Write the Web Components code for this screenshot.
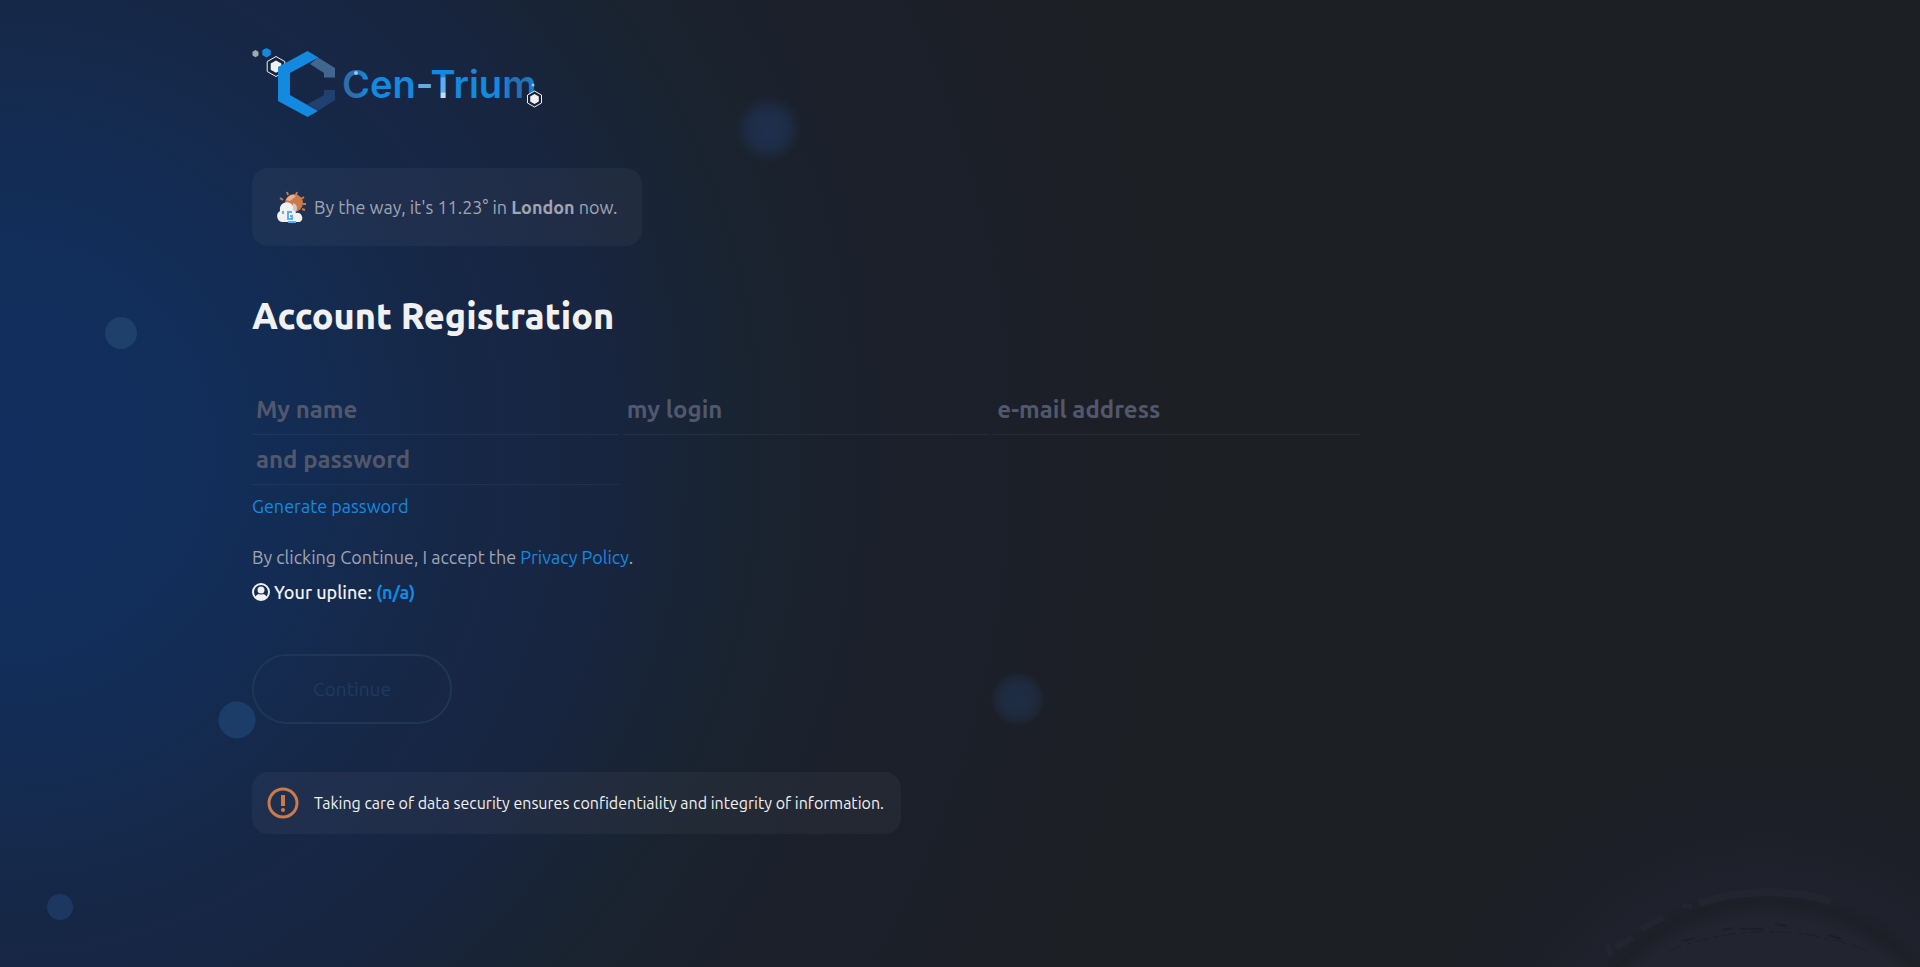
<!DOCTYPE html>
<html lang="en">
<head>
<meta charset="utf-8">
<meta name="viewport" content="width=device-width, initial-scale=1">
<title>Cen-Trium – Account Registration</title>
<style>
  body { margin: 0; background: #1c1f23; font-family: Ubuntu, "Noto Sans", sans-serif; color: #f1f1f1; }
</style>
</head>
<body>
<registration-page></registration-page>
<script>
const define = (name, html, setup) => {
  const template = document.createElement('template');
  template.innerHTML = html;
  customElements.define(name, class extends HTMLElement {
    constructor() {
      super();
      this.attachShadow({ mode: 'open' }).append(template.content.cloneNode(true));
    }
    connectedCallback() { if (setup) setup(this, this.shadowRoot); }
  });
};

/* Decorative glow, bubbles and planet behind the form */
define('page-backdrop', `
  <style>
    :host { display: block; position: absolute; inset: 0; overflow: hidden; z-index: -1;
      background: radial-gradient(circle at 0 450px, #112e5e 0, #122e5b 200px, #142b50 340px, #162746 470px, #182540 600px, #19232f 760px, #1b202b 900px, #1c1f28 1060px, #1c1f23 1190px); }
    i { position: absolute; border-radius: 50%; transform: translate(-50%, -50%); width: var(--d); height: var(--d); background: #1f406b; }
    .a { left: 121px; top: 333px; --d: 32px; }
    .b { left: 237px; top: 720px; --d: 37px; background: #1d3d69; }
    .c { left: 60px; top: 907px; --d: 26px; background: #1d3860; }
    .d { left: 40%; top: 129px; --d: 68px; background: radial-gradient(closest-side, #1e304f 0, #1d2d47 55%, #1c2638 78%, transparent 100%); }
    .e { left: 53%; top: 699px; --d: 54px; background: radial-gradient(closest-side, #1f2d45 0, #1e2a3f 60%, #1e2533 85%, transparent 100%); }
    svg { position: absolute; right: 0; bottom: 0; width: 520px; height: 220px; }
  </style>
  <i class="a"></i><i class="b"></i><i class="c"></i><i class="d"></i><i class="e"></i>
  <svg viewBox="1400 747 520 220" aria-hidden="true">
    <defs>
      <radialGradient id="g" gradientUnits="userSpaceOnUse" cx="1767" cy="1105" r="345">
        <stop offset="0" stop-color="#222530"/><stop offset=".54" stop-color="#222530"/>
        <stop offset=".59" stop-color="#1c1f26"/><stop offset=".64" stop-color="#1f222c"/>
        <stop offset=".8" stop-color="#1c1f28"/><stop offset=".94" stop-color="#1c1f26"/><stop offset="1" stop-color="#1c1f23"/>
      </radialGradient>
    </defs>
    <circle cx="1767" cy="1105" r="345" fill="url(#g)"/>
    <g fill="none" stroke="#222530">
      <path stroke-width="8" d="M1699 903Q1765 882 1831 901"/>
      <path stroke-width="7" d="M1641 929L1664 917M1616 947L1633 937"/>
      <path stroke-width="5" d="M1607 944L1611 956M1682 905L1692 907"/>
    </g>
    <g fill="none" stroke="#1c1f26">
      <path d="M1668 951Q1767 912 1868 951" stroke-dasharray="14 6 5 3"/>
      <path d="M1683 941l12-3M1722 930l10-2M1740 929h24M1775 924l12 2M1828 935l14 4" stroke-width="2"/>
    </g>
  </svg>
`);

define('brand-logo', `
  <style>
    :host { display: block; width: 320px; height: 95px; }
    svg { display: block; width: 100%; height: 100%; }
    text { font: 600 38px Inter, "Liberation Sans", sans-serif; }
  </style>
  <svg viewBox="0 0 320 95" role="img" aria-label="Cen-Trium">
    <defs>
      <linearGradient id="ink" gradientUnits="userSpaceOnUse" x1="102" y1="0" x2="297" y2="0">
        <stop offset="0" stop-color="#2a6fae"/><stop offset=".08" stop-color="#2a6fae"/>
        <stop offset=".12" stop-color="#1489e0"/><stop offset=".83" stop-color="#1489e0"/>
        <stop offset=".86" stop-color="#256fb2"/><stop offset=".94" stop-color="#256fb2"/><stop offset="1" stop-color="#1489e0"/>
      </linearGradient>
      <linearGradient id="stem" gradientUnits="userSpaceOnUse" x1="0" y1="36" x2="0" y2="64">
        <stop offset=".2" stop-color="#1489e0"/><stop offset=".25" stop-color="#5eafe8"/>
        <stop offset=".75" stop-color="#5eafe8"/><stop offset=".8" stop-color="#cfdbe5"/>
      </linearGradient>
    </defs>
    <path d="M15.500 15l3 1.800v3.600l-3 1.800-3-1.800v-3.600z" fill="#a3a6ac"/>
    <path d="M26.500 13l4.200 2.300v4.800l-4.200 2.300-4.200-2.300v-4.800z" fill="#1489e0"/>
    <path d="M36 21.500l8.800 5v10l-8.800 5-8.800-5v-10z" fill="#152544" stroke="#f1f1f1" stroke-width="1"/>
    <path d="M36 25.500l5.300 3v6.200L36 37.700l-5.300-3v-6.200z" fill="#f1f1f1"/>
    <path d="M67.500 16L38 32v34L67.500 82 78 76 50 60V38l28.500-15.500z" fill="#1489e0"/>
    <path d="M78 22.500L95 33v9.500H84V38L70 29z" fill="#41678f"/>
    <path d="M84 55h11v10L78 76 67 69.500 84 60z" fill="#20406f"/>
    <text x="102" y="63" fill="url(#ink)">Cen<tspan fill="#5eafe8">-</tspan><tspan fill="url(#stem)">T</tspan>rium</text>
    <g fill="#8bcaf2">
      <circle cx="116" cy="38" r="2"/><circle cx="293" cy="50" r="1.500"/>
    </g>
    <path d="M294.500 56l7 4v8l-7 4-7-4v-8z" fill="#18243a" stroke="#f1f1f1"/>
    <path d="M294.500 59l4.300 2.500v5l-4.300 2.500-4.300-2.500v-5z" fill="#f1f1f1"/>
  </svg>
`);

define('info-card', `
  <style>
    :host { display: flex; align-items: center; width: fit-content; box-sizing: border-box;
      border-radius: 16px; background: rgba(255,255,255,.04); }
  </style>
  <slot name="icon"></slot><slot></slot>
`);

define('field-input', `
  <style>
    :host { display: block; }
    input { display: block; box-sizing: border-box; width: 100%; height: 50px; padding: 0 4px; border: 0;
      border-bottom: 1px solid rgba(255,255,255,.05); background: none; outline: none; color: #f1f1f1;
      font: 600 24px Ubuntu, "Noto Sans", sans-serif; }
    input::placeholder { color: #52586c; opacity: 1; }
  </style>
  <input>
`, (host, root) => {
  const input = root.querySelector('input');
  input.type = host.getAttribute('type') || 'text';
  input.placeholder = host.getAttribute('label');
  input.setAttribute('aria-label', host.getAttribute('label'));
});

define('continue-button', `
  <style>
    :host { display: block; width: fit-content; }
    button { display: block; box-sizing: border-box; width: 200px; height: 70px; border: 2px solid #203656; border-radius: 35px;
      background: none; color: #1f3a61; font: 400 19px Ubuntu, "Noto Sans", sans-serif; }
  </style>
  <button type="button" disabled><slot></slot></button>
`);

define('registration-page', `
  <style>
    :host { display: block; position: relative; z-index: 0; min-height: 100vh; }
    main { box-sizing: border-box; width: min(1416px, 100% - 48px); margin: 0 auto; padding: 35px 0 48px; font-size: 18px; line-height: 28px; }
    brand-logo { margin-left: -12px; }
    a { color: #1489e0; text-decoration: none; }
    .weather { margin-top: 38px; height: 78px; padding: 0 24px 0 23px; gap: 7px; color: #a0a5b3; }
    h1 { margin: 50px 0 0; font-size: 36px; line-height: 40px; font-weight: 800; }
    form { margin-top: 49px; }
    .fields { display: grid; grid-template-columns: repeat(3, 1fr); column-gap: 4px; max-width: 1108px; }
    .generate { display: block; width: fit-content; margin-top: 7px; }
    p { margin: 0; }
    .terms { margin-top: 23px; color: #a0a5b3; }
    .upline { display: flex; align-items: center; gap: 4px; margin-top: 7px; font-weight: 500; }
    .upline a { font-weight: 600; }
    continue-button { margin-top: 48px; }
    .notice { margin-top: 48px; height: 62px; padding: 0 17px 0 15px; gap: 15px; font-size: 16px; font-weight: 400; }
    svg { display: block; flex: none; }
  </style>
  <page-backdrop></page-backdrop>
  <main>
    <brand-logo></brand-logo>
    <info-card class="weather">
      <svg slot="icon" width="32" height="32" viewBox="0 0 32 32" aria-hidden="true">
        <path d="M13 4l-1-3M21 4l1-3M26 8l3-2M28 13h3M27 18l3 1M8 9L5 7" stroke="#cb7a4b" stroke-width="2"/>
        <circle cx="19" cy="12" r="9" fill="#cb7a4b"/>
        <path d="M11 9q4-7 10-4l-6 5z" fill="#e2b59b"/>
        <path d="M7 31a6 6 0 0 1-2-11 7 7 0 0 1 13-5l3 7a5 5 0 0 1 4 9z" fill="#f1f1f1"/>
        <path d="M18 12q6 2 3 9l-3-2z" fill="#c9ccd1"/>
        <path d="M8 20v3M17 21h-4v7h4v-3h-2M13 31h8" fill="none" stroke="#5eafe8" stroke-width="2"/>
      </svg>
      <span>By the way, it's 11.23° in <b>London</b> now.</span>
    </info-card>
    <h1>Account Registration</h1>
    <form>
      <div class="fields">
        <field-input label="My name"></field-input>
        <field-input label="my login"></field-input>
        <field-input label="e-mail address" type="email"></field-input>
        <field-input label="and password" type="password"></field-input>
      </div>
      <a class="generate" href="#generate">Generate password</a>
      <p class="terms">By clicking Continue, I accept the <a href="#privacy">Privacy Policy</a>.</p>
      <p class="upline">
        <svg width="18" height="18" viewBox="0 0 18 18" aria-hidden="true">
          <circle cx="9" cy="9" r="8" fill="none" stroke="#f1f1f1" stroke-width="2"/>
          <circle cx="9" cy="7" r="3.500" fill="#f1f1f1"/>
          <path d="M3 14q2-3 4-3 2 1 4 0 2 0 4 3-2 3-6 3t-6-3z" fill="#f1f1f1"/>
        </svg>
        <span>Your upline: <a href="#upline">(n/a)</a></span>
      </p>
      <continue-button>Continue</continue-button>
    </form>
    <info-card class="notice">
      <svg slot="icon" width="32" height="32" viewBox="0 0 32 32" aria-hidden="true">
        <circle cx="16" cy="16" r="14" fill="none" stroke="#cb7a4b" stroke-width="3"/>
        <path d="M16 8v11" stroke="#cb7a4b" stroke-width="4"/><circle cx="16" cy="23" r="2" fill="#cb7a4b"/>
      </svg>
      <span>Taking care of data security ensures confidentiality and integrity of information.</span>
    </info-card>
  </main>
`);
</script>
</body>
</html>
